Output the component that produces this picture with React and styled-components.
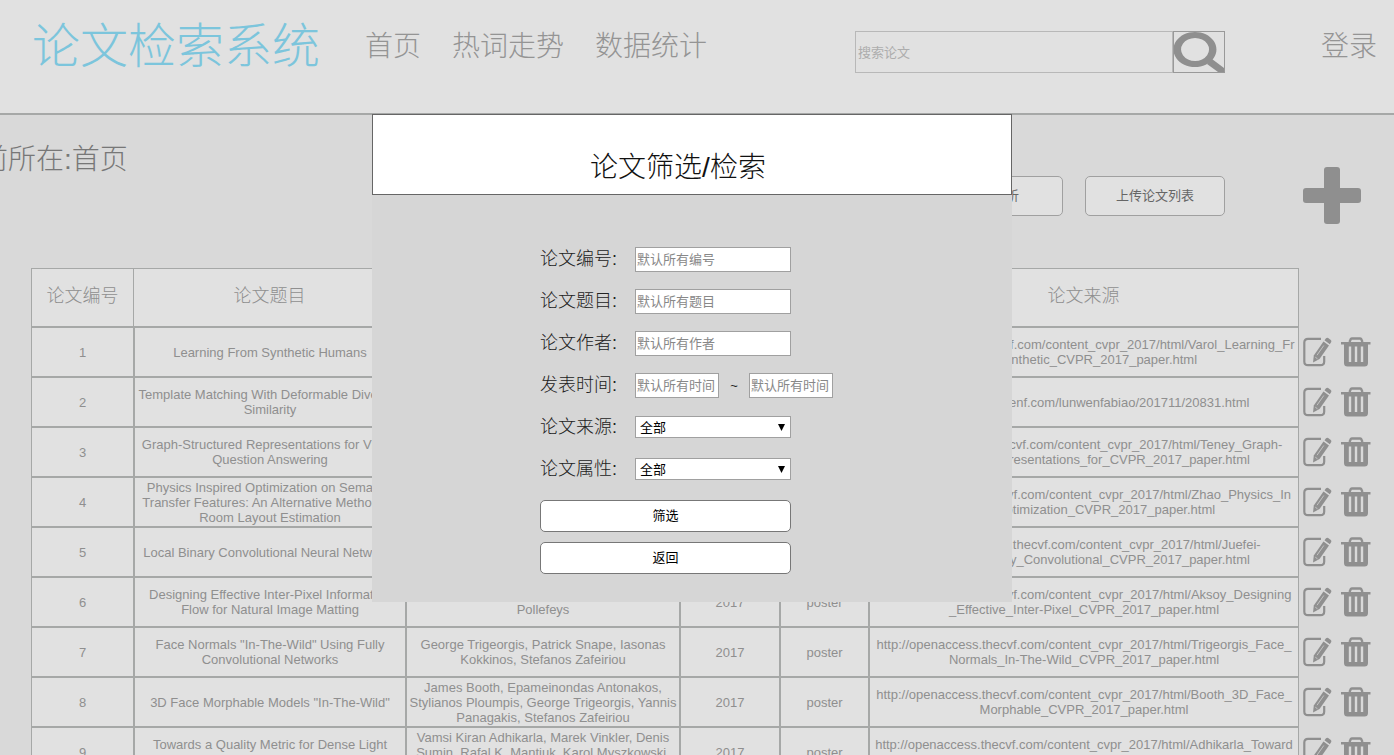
import React, { useState } from 'react'
import styled, { createGlobalStyle } from 'styled-components'

const Line = '#a6a8a7'
const Muted = '#8f8f8f'
const SansFont = '"Liberation Sans", "Noto Sans CJK SC", sans-serif'

const GlobalStyles = createGlobalStyle`
    * {
        box-sizing: border-box;
    }
    body {
        margin: 0;
        overflow: hidden;
        background-color: #d9d9d9;
        color: ${Muted};
        font-family: ${SansFont};
        font-size: 13px;
        line-height: 15px;
    }
    button, input, select {
        font-family: inherit;
        font-size: 13px;
    }
    h1, h2, p {
        margin: 0;
        font-weight: 300;
    }
`
const Page = styled.div`
    position: relative;
    height: 100vh;
    overflow: hidden;
`
const Header = styled.header`
    display: flex;
    align-items: flex-start;
    height: 115px;
    padding: 0 17px 0 32px;
    background-color: #e1e1e1;
    border-bottom: 2px solid ${Line};
`
const Logo = styled.h1`
    flex-shrink: 0;
    font-size: 48px;
    line-height: 93px;
    color: #7cc5dc;
`
const Nav = styled.nav`
    display: flex;
    flex-shrink: 0;
    gap: 31px;
    margin-left: 45px;
`
const NavLink = styled.a`
    flex-shrink: 0;
    font-size: 28px;
    font-weight: 300;
    line-height: 93px;
    color: #949494;
    text-decoration: none;
`
const SearchForm = styled.form`
    display: flex;
    width: 370px;
    height: 42px;
    margin: 31px auto 0 148px;
`
const SearchInput = styled.input`
    flex: 1;
    min-width: 0;
    padding: 0 2px;
    background: none;
    border: 1px solid #b8b8b8;
    border-radius: 0;
    outline: none;
    &::placeholder {
        color: #adadad;
    }
`
const SearchButton = styled.button`
    width: 52px;
    padding: 0;
    background: none;
    border: 1px solid #999;
    cursor: pointer;
    svg {
        display: block;
    }
`
const Toolbar = styled.div`
    display: flex;
    align-items: flex-start;
    justify-content: space-between;
    height: 153px;
    padding-right: 33px;
`
const Breadcrumb = styled.p`
    margin-left: -48px;
    font-size: 28px;
    line-height: 90px;
    color: #777;
`
const Tools = styled.div`
    display: flex;
    align-items: center;
    gap: 22px;
    margin-top: 52px;
`
const ToolButton = styled.button`
    width: 140px;
    height: 40px;
    padding: 0 0 4px;
    background-color: #e1e1e1;
    border: 1px solid #a0a0a0;
    border-radius: 5px;
    color: #666;
    cursor: pointer;
`
const IconButton = styled.button`
    padding: 0;
    background: none;
    border: none;
    color: ${Muted};
    cursor: pointer;
    svg {
        display: block;
    }
`
const AddButton = styled(IconButton)`
    margin-left: 56px;
`
const TableWrap = styled.div`
    padding: 0 18px 0 31px;
`
const Table = styled.table`
    width: 100%;
    table-layout: fixed;
    border-spacing: 0;
    text-align: center;
`
const Col = styled.col`
    width: ${({w}) => w ? `${w}px` : 'auto'};
`
const Th = styled.th`
    height: 59px;
    padding: 0 0 2px;
    background-color: #e1e1e1;
    border: 1px solid ${Line};
    border-left-width: ${({first}) => first ? '1px' : '0'};
    font-size: 18px;
    font-weight: 300;
`
const Td = styled.td`
    height: 50px;
    padding: 1px;
    background-color: #e1e1e1;
    border: 1px solid ${Line};
    white-space: pre-line;
`
const ActionCell = styled.td`
    padding: 0 0 1px 4px;
`
const Actions = styled.div`
    display: flex;
    gap: 9px;
`
const Modal = styled.section`
    position: absolute;
    top: 114px;
    left: calc(50% - 325px);
    width: 640px;
    background-color: #d6d6d6;
    color: #222;
`
const ModalHeader = styled.div`
    height: 81px;
    padding: 32px 28px 0 0;
    background-color: #fff;
    border: 1px solid #666;
    text-align: center;
`
const ModalTitle = styled.h2`
    font-size: 28px;
    line-height: 42px;
    color: #111;
`
const FilterForm = styled.form`
    padding: 43px 168px 28px;
`
const Field = styled.div`
    display: flex;
    align-items: center;
    height: 42px;
`
const Label = styled.label`
    flex-shrink: 0;
    width: 95px;
    padding-bottom: 1px;
    font-size: 18px;
    font-weight: 300;
    line-height: 24px;
`
const Input = styled.input`
    flex-shrink: 0;
    width: ${({half}) => half ? '84px' : '156px'};
    height: 25px;
    padding: 0 1px;
    background-color: #fff;
    border: 1px solid #a0a0a0;
    outline: none;
    &::placeholder {
        color: #888;
    }
`
const Tilde = styled.span`
    flex-shrink: 0;
    width: 30px;
    text-align: center;
`
const SelectWrap = styled.div`
    position: relative;
    width: 156px;
    svg {
        position: absolute;
        top: 8px;
        right: 6px;
        pointer-events: none;
    }
`
const Select = styled.select`
    display: block;
    width: 100%;
    height: 22px;
    padding: 0 4px;
    appearance: none;
    background-color: #fff;
    border: 1px solid #a0a0a0;
    border-radius: 0;
    color: #000;
`
const FormButtons = styled.div`
    display: flex;
    flex-direction: column;
    gap: 10px;
    width: 251px;
    margin-top: 10px;
`
const FormButton = styled.button`
    height: 32px;
    padding: 0 0 4px;
    background-color: #fff;
    border: 1px solid #777;
    border-radius: 5px;
    color: #000;
    cursor: pointer;
`

const openAccess = 'http://openaccess.thecvf.com/content_cvpr_2017/html/'
const papers = [
  { title: 'Learning From Synthetic Humans', authors: 'Gul Varol, Javier Romero, Xavier Martin, Naureen Mahmood', url: openAccess + 'Varol_Learning_Fr\nom_Synthetic_CVPR_2017_paper.html' },
  { title: 'Template Matching With Deformable Diversity Similarity', authors: 'Itamar Talmi, Roey Mechrez, Lihi Zelnik-Manor', url: 'http://www.lunwenf.com/lunwenfabiao/201711/20831.html' },
  { title: 'Graph-Structured Representations for Visual Question Answering', authors: 'Damien Teney, Lingqiao Liu, Anton van den Hengel', url: openAccess + 'Teney_Graph-\nStructured_Representations_for_CVPR_2017_paper.html' },
  { title: 'Physics Inspired Optimization on Semantic Transfer Features: An Alternative Method for Room Layout Estimation', authors: 'Hao Zhao, Ming Lu, Anbang Yao, Yiwen Guo, Yurong Chen, Li Zhang', url: openAccess + 'Zhao_Physics_In\nspired_Optimization_CVPR_2017_paper.html' },
  { title: 'Local Binary Convolutional Neural Networks', authors: 'Felix Juefei-Xu, Vishnu Naresh Boddeti, Marios Savvides', url: openAccess + 'Juefei-\nXu_Local_Binary_Convolutional_CVPR_2017_paper.html' },
  { title: 'Designing Effective Inter-Pixel Information Flow for Natural Image Matting', authors: 'Yagiz Aksoy, Tunc Ozan Aydin, Marc\nPollefeys', url: openAccess + 'Aksoy_Designing\n_Effective_Inter-Pixel_CVPR_2017_paper.html' },
  { title: 'Face Normals "In-The-Wild" Using Fully Convolutional Networks', authors: 'George Trigeorgis, Patrick Snape, Iasonas Kokkinos, Stefanos Zafeiriou', url: openAccess + 'Trigeorgis_Face_\nNormals_In-The-Wild_CVPR_2017_paper.html' },
  { title: '3D Face Morphable Models "In-The-Wild"', authors: 'James Booth, Epameinondas Antonakos, Stylianos Ploumpis, George Trigeorgis, Yannis Panagakis, Stefanos Zafeiriou', url: openAccess + 'Booth_3D_Face_\nMorphable_CVPR_2017_paper.html' },
  { title: 'Towards a Quality Metric for Dense Light Fields', authors: 'Vamsi Kiran Adhikarla, Marek Vinkler, Denis Sumin, Rafal K. Mantiuk, Karol Myszkowski, Hans-Peter Seidel', url: openAccess + 'Adhikarla_Toward\ns_a_Quality_CVPR_2017_paper.html' },
]
const columns = ['论文编号', '论文题目', '论文作者', '发表时间', '论文属性', '论文来源']

function SearchIcon() {
  return (
    <svg width="50" height="40" viewBox="0 0 50 40" fill={Muted}>
      <path fillRule="evenodd" d="M21 0 A21.500 17.500 0 1 1 20.900 0 Z M21 6 A14 11.500 0 1 0 21.100 6 Z"/>
      <path d="M33 32 L38 27 L50 36 V40 H44 Z"/>
    </svg>
  )
}

function PlusIcon() {
  return (
    <svg width="58" height="58" viewBox="0 0 58 58" fill="currentColor">
      <rect x="21" y="0" width="16" height="57" rx="3"/>
      <rect x="0" y="21" width="58" height="15" rx="3"/>
    </svg>
  )
}

function EditIcon() {
  return (
    <svg width="29" height="30" viewBox="0 0 29 30">
      <path d="M18 1.800 H5 Q1.300 1.800 1.300 5.500 V24.500 Q1.300 28.200 5 28.200 H17.500 Q21.200 28.200 21.200 24.500 V19" fill="none" stroke="currentColor" strokeWidth="2.200"/>
      <path d="M20.500 4.500 L26 8.500 L16.500 22 L10 25.500 L10.800 18.500 Z" fill="currentColor"/>
      <path d="M21.500 3.200 L23 1.300 Q24 .300 25.200 1.100 L27.800 3 Q28.900 4 28.100 5.200 L26.800 7.200 Z" fill="currentColor"/>
      <path d="M20.800 8.500 L14 18.200 M12.300 20.200 L14.500 21.800" fill="none" stroke="#c4c4c4" strokeWidth="1"/>
    </svg>
  )
}

function TrashIcon() {
  return (
    <svg width="30" height="30" viewBox="0 0 30 30">
      <path d="M8.500 5 L9.800 2 Q10.200 1.500 11 1.500 H19 Q19.800 1.500 20.200 2 L21.500 5" fill="none" stroke="currentColor" strokeWidth="2.400"/>
      <path d="M0 5 H29.500 V7.500 H27 V26 Q27 29.500 23.500 29.500 H6.500 Q3 29.500 3 26 V7.500 H0 Z" fill="currentColor"/>
      <path d="M9 9.500 V25 M15 9.500 V25 M21 9.500 V25" stroke="#d9d9d9" strokeWidth="2.400"/>
    </svg>
  )
}

function SelectField({ id, label }) {
  return (
    <Field>
      <Label htmlFor={id}>{label}:</Label>
      <SelectWrap>
        <Select id={id}>
          <option>全部</option>
        </Select>
        <svg width="7" height="7" viewBox="0 0 7 7"><path d="M0 0 H7 L3.500 7 Z" fill="#000"/></svg>
      </SelectWrap>
    </Field>
  )
}

function FilterModal({ onClose }) {
  return (
    <Modal role="dialog" aria-labelledby="filter-title">
      <ModalHeader>
        <ModalTitle id="filter-title">论文筛选/检索</ModalTitle>
      </ModalHeader>
      <FilterForm onSubmit={(e) => e.preventDefault()}>
        <Field>
          <Label htmlFor="number">论文编号:</Label>
          <Input id="number" placeholder="默认所有编号"/>
        </Field>
        <Field>
          <Label htmlFor="title">论文题目:</Label>
          <Input id="title" placeholder="默认所有题目"/>
        </Field>
        <Field>
          <Label htmlFor="author">论文作者:</Label>
          <Input id="author" placeholder="默认所有作者"/>
        </Field>
        <Field>
          <Label htmlFor="from">发表时间:</Label>
          <Input id="from" half="true" placeholder="默认所有时间"/>
          <Tilde>~</Tilde>
          <Input id="to" half="true" aria-label="发表时间" placeholder="默认所有时间"/>
        </Field>
        <SelectField id="source" label="论文来源"/>
        <SelectField id="kind" label="论文属性"/>
        <FormButtons>
          <FormButton type="submit">筛选</FormButton>
          <FormButton type="button" onClick={onClose}>返回</FormButton>
        </FormButtons>
      </FilterForm>
    </Modal>
  )
}

function PaperTable() {
  return (
    <TableWrap>
      <Table>
        <colgroup>
          <Col w={103}/>
          <Col w={272}/>
          <Col w={274}/>
          <Col w={100}/>
          <Col w={89}/>
          <Col/>
          <Col w={77}/>
        </colgroup>
        <thead>
          <tr>
            {columns.map((name, idx) => <Th key={name} first={idx === 0 ? 'true' : undefined}>{name}</Th>)}
          </tr>
        </thead>
        <tbody>
          {
            papers.map((paper, idx) => (
              <tr key={idx}>
                <Td>{idx + 1}</Td>
                <Td>{paper.title}</Td>
                <Td>{paper.authors}</Td>
                <Td>2017</Td>
                <Td>poster</Td>
                <Td>{paper.url}</Td>
                <ActionCell>
                  <Actions>
                    <IconButton type="button" aria-label="编辑"><EditIcon/></IconButton>
                    <IconButton type="button" aria-label="删除"><TrashIcon/></IconButton>
                  </Actions>
                </ActionCell>
              </tr>
            ))
          }
        </tbody>
      </Table>
    </TableWrap>
  )
}

function App() {
  const [open, setOpen] = useState(true)
  return (
    <Page>
      <GlobalStyles/>
      <Header>
        <Logo>论文检索系统</Logo>
        <Nav>
          <NavLink href="#home">首页</NavLink>
          <NavLink href="#trend">热词走势</NavLink>
          <NavLink href="#stats">数据统计</NavLink>
        </Nav>
        <SearchForm onSubmit={(e) => e.preventDefault()}>
          <SearchInput aria-label="搜索论文" placeholder="搜索论文"/>
          <SearchButton aria-label="搜索"><SearchIcon/></SearchButton>
        </SearchForm>
        <NavLink href="#login">登录</NavLink>
      </Header>
      <Toolbar>
        <Breadcrumb>当前所在:首页</Breadcrumb>
        <Tools>
          <ToolButton type="button" onClick={() => setOpen(true)}>论文分析</ToolButton>
          <ToolButton type="button">上传论文列表</ToolButton>
          <AddButton type="button" aria-label="添加"><PlusIcon/></AddButton>
        </Tools>
      </Toolbar>
      <PaperTable/>
      {open && <FilterModal onClose={() => setOpen(false)}/>}
    </Page>
  )
}

export default App
